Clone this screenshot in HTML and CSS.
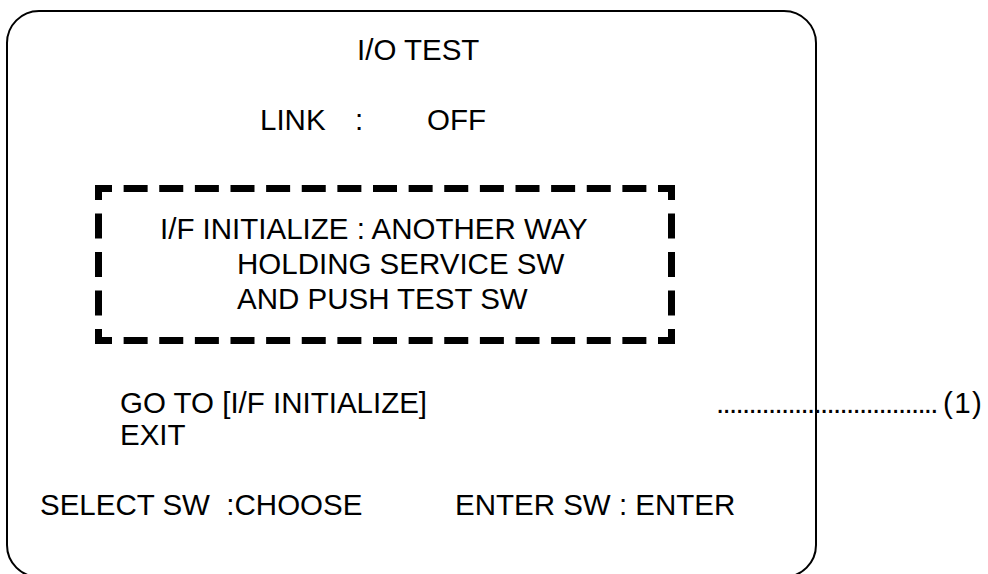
FILE: index.html
```html
<!DOCTYPE html>
<html lang="en">

<head>
    <meta charset="UTF-8">
    <meta name="viewport" content="width=device-width, initial-scale=1.0">
    <title>I/O TEST</title>
    <link rel="stylesheet" href="styles.css">
</head>

<body>
    <div class="screen">
        <div class="title">I/O TEST</div>

        <div class="link-row">
            <span class="link-name">LINK</span>
            <span class="link-sep">:</span>
            <span class="link-value">OFF</span>
        </div>

        <div class="notice">
            <svg class="notice-frame" width="580" height="159" viewBox="0 0 580 159">
                <path class="dash-h" d="M0 3.5 H580" />
                <path class="dash-h" d="M0 155.5 H580" />
                <path class="dash-v" d="M3.5 0 V159" />
                <path class="dash-v" d="M576.5 0 V159" />
            </svg>
            <div class="notice-line">I/F INITIALIZE : ANOTHER WAY</div>
            <div class="notice-line indent">HOLDING SERVICE SW</div>
            <div class="notice-line indent">AND PUSH TEST SW</div>
        </div>

        <div class="menu">
            <div class="menu-row">
                <span class="menu-label">GO TO [I/F INITIALIZE]</span>
                <span class="leader">..................................</span>
                <span class="note-num">(1)</span>
            </div>
            <div class="menu-row">
                <span class="menu-label">EXIT</span>
            </div>
        </div>

        <div class="keys">
            <span class="key-select">SELECT SW  :CHOOSE</span>
            <span class="key-enter">ENTER SW : ENTER</span>
        </div>
    </div>
</body>

</html>
```

FILE: styles.css
```css
/* page */
body {
    margin: 0;
    height: 574px;
    overflow: hidden;
    background-color: #fff;
    color: #000;
    font-family: "Liberation Sans", Arial, sans-serif;
    font-size: 29.5px;
    line-height: 32px;
}

/* rounded monitor frame */
.screen {
    box-sizing: border-box;
    width: 811px;
    height: 568px;
    margin: 10px 0 0 6px;
    padding-top: 22px;
    border: 2px solid #000;
    border-radius: 33px;
}

.title {
    padding-left: 349px;
}

/* LINK : OFF */
.link-row {
    display: flex;
    margin-top: 38px;
    padding-left: 252px;
}

.link-name {
    width: 95px;
}

.link-sep {
    width: 72px;
}

/* dashed message box */
.notice {
    position: relative;
    box-sizing: border-box;
    width: 580px;
    height: 159px;
    margin: 49px 0 0 87px;
    padding: 26px 0 0 65px;
    line-height: 35px;
}

.notice-frame {
    position: absolute;
    top: 0;
    left: 0;
}

.notice-frame path {
    fill: none;
    stroke: #000;
    stroke-width: 7;
}

.dash-h {
    stroke-dasharray: 24 11.625;
    stroke-dashoffset: 7;
}

.dash-v {
    stroke-dasharray: 25 13.5;
    stroke-dashoffset: 10;
}

.indent {
    padding-left: 77px;
}

/* menu */
.menu {
    margin-top: 43px;
    padding-left: 112px;
}

.menu-row {
    display: flex;
    white-space: nowrap;
}

.menu-label {
    flex: none;
    width: 596px;
}

.leader {
    letter-spacing: -1.7px;
}

.note-num {
    margin-left: 6px;
    letter-spacing: 1.5px;
}

/* key guide */
.keys {
    display: flex;
    margin-top: 38px;
    padding-left: 32px;
    white-space: pre;
}

.key-select {
    width: 415px;
}
```
